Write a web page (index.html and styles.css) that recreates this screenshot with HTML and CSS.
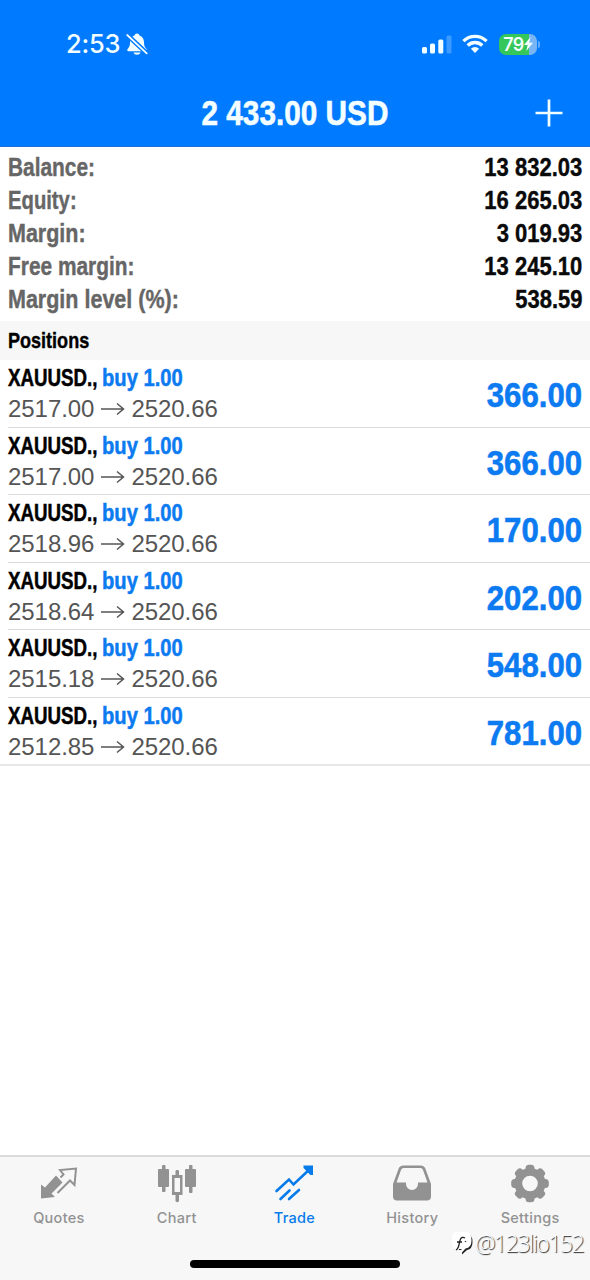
FILE: index.html
```html
<!DOCTYPE html>
<html lang="en">
<head>
<meta charset="utf-8">
<title>Trade</title>
<link rel="stylesheet" href="styles.css">
</head>
<body>
<div class="app">
  <header class="header">
    <div class="status">
      <div class="status-left">
        <span class="clock">2:53</span>
        <svg class="bell" width="22" height="24" viewBox="0 0 22 24"><path fill="#f2feff" d="M11 1.500c1.400 0 2 .8 2.300 1.700C16.500 4.500 18 7 18 10.500c0 3.500 1 5 2.400 6.500.8 1 .3 2.300-.8 2.300H2.400c-1.100 0-1.600-1.300-.8-2.300C3 15.500 4 14 4 10.500 4 7 5.500 4.500 8.700 3.200 9 2.300 9.600 1.500 11 1.500zM7.500 20.500h7c-.5 1.600-1.900 2.200-3.500 2.200s-3-.6-3.500-2.200z"/><path stroke="#007aff" stroke-width="4.600" d="M0 1.800 22 22.500"/><path stroke="#f2feff" stroke-width="1.800" stroke-linecap="round" d="M1.200 3 20.700 21.300"/></svg>
      </div>
      <div class="status-right">
        <svg width="30" height="20" viewBox="0 0 30 20"><g fill="#f2feff"><rect x="0" y="13" width="5" height="6.500" rx="1.500"/><rect x="8" y="9.500" width="5" height="10" rx="1.500"/><rect x="16.300" y="5.500" width="5" height="14" rx="1.500"/><rect opacity=".25" x="24.500" y="1.500" width="5" height="18" rx="1.500"/></g></svg>
        <svg class="wifi" width="26" height="20" viewBox="0 0 26 20"><g fill="none" stroke="#f2feff" stroke-width="3.300"><path d="M1.400 7.200a16.500 16.500 0 0 1 23.200 0"/><path d="M5.700 11.500a10.400 10.400 0 0 1 14.600 0"/></g><path fill="#f2feff" d="M8.900 14.700a5.900 5.900 0 0 1 8.200 0L13 19z"/></svg>
        <div class="battery"><span class="battery-level">79</span><svg width="9" height="14" viewBox="0 0 9 14"><path fill="#f2feff" d="M6.500 0 0 8h3.600L2.300 14 9 5.800H5.300z"/></svg></div><span class="battery-cap"></span>
      </div>
    </div>
    <div class="titlebar">
      <h1 class="title">2 433.00 USD</h1>
      <svg class="plus" width="28" height="28" viewBox="0 0 28 28"><path stroke="#f2feff" stroke-width="2.700" d="M14 .5v27M.5 14h27"/></svg>
    </div>
  </header>

  <section class="summary">
    <div class="summary-row"><span class="label">Balance:</span><span class="value">13 832.03</span></div>
    <div class="summary-row"><span class="label label-narrow">Equity:</span><span class="value">16 265.03</span></div>
    <div class="summary-row"><span class="label label-wide">Margin:</span><span class="value">3 019.93</span></div>
    <div class="summary-row"><span class="label">Free margin:</span><span class="value">13 245.10</span></div>
    <div class="summary-row"><span class="label label-wide">Margin level (%):</span><span class="value">538.59</span></div>
  </section>

  <h2 class="section"><span class="section-text">Positions</span></h2>
  <main class="positions">
    <article class="position"><div><div class="deal"><span class="symbol">XAUUSD.,</span><span class="side">buy 1.00</span></div><div class="prices"><span>2517.00</span><svg class="arrow" viewBox="0 0 24 14"><path d="M0 7h22M16 1.500 22.500 7 16 12.500"/></svg><span>2520.66</span></div></div><span class="profit">366.00</span></article>
    <article class="position"><div><div class="deal"><span class="symbol">XAUUSD.,</span><span class="side">buy 1.00</span></div><div class="prices"><span>2517.00</span><svg class="arrow" viewBox="0 0 24 14"><path d="M0 7h22M16 1.500 22.500 7 16 12.500"/></svg><span>2520.66</span></div></div><span class="profit">366.00</span></article>
    <article class="position"><div><div class="deal"><span class="symbol">XAUUSD.,</span><span class="side">buy 1.00</span></div><div class="prices"><span>2518.96</span><svg class="arrow" viewBox="0 0 24 14"><path d="M0 7h22M16 1.500 22.500 7 16 12.500"/></svg><span>2520.66</span></div></div><span class="profit">170.00</span></article>
    <article class="position"><div><div class="deal"><span class="symbol">XAUUSD.,</span><span class="side">buy 1.00</span></div><div class="prices"><span>2518.64</span><svg class="arrow" viewBox="0 0 24 14"><path d="M0 7h22M16 1.500 22.500 7 16 12.500"/></svg><span>2520.66</span></div></div><span class="profit">202.00</span></article>
    <article class="position"><div><div class="deal"><span class="symbol">XAUUSD.,</span><span class="side">buy 1.00</span></div><div class="prices"><span>2515.18</span><svg class="arrow" viewBox="0 0 24 14"><path d="M0 7h22M16 1.500 22.500 7 16 12.500"/></svg><span>2520.66</span></div></div><span class="profit">548.00</span></article>
    <article class="position"><div><div class="deal"><span class="symbol">XAUUSD.,</span><span class="side">buy 1.00</span></div><div class="prices"><span>2512.85</span><svg class="arrow" viewBox="0 0 24 14"><path d="M0 7h22M16 1.500 22.500 7 16 12.500"/></svg><span>2520.66</span></div></div><span class="profit">781.00</span></article>
  </main>

  <nav class="tabs">
    <a class="tab"><svg width="40" height="40" viewBox="0 0 40 40"><path fill="#929292" d="M2 20.500 6 23.500 17 11.500 23.500 18.500 12.500 29.500l3.500 3.500L2 34.500z"/><path fill="none" stroke="#929292" stroke-width="2" d="M21.500 13.500 24.500 10.500 21 6 37 4.500 35.500 21 31 16.500 18.500 29"/></svg><span>Quotes</span></a>
    <a class="tab"><svg width="40" height="40" viewBox="0 0 40 40"><g fill="#929292"><rect x="1" y="5" width="11" height="18" rx="1"/><rect x="5" y="1" width="3.500" height="27" rx="1"/><rect x="28" y="5" width="11" height="18" rx="1"/><rect x="32" y="1" width="3.500" height="28" rx="1"/><path d="M18.500 7c0-1.500 3.500-1.500 3.500 0v4h3.500v20H22v6c0 1.500-3.500 1.500-3.500 0v-6H15V11h3.500zm-1 7v14H23V14z"/></g></svg><span>Chart</span></a>
    <a class="tab tab-active"><svg width="40" height="40" viewBox="0 0 40 40"><g fill="none" stroke="#087bea" stroke-width="2.600" stroke-linecap="round"><path d="M2.500 27 15 15.500l4.500 5L37 4"/><path d="M6.500 35 15.500 26.500M15 35 25 26"/></g><path fill="#087bea" d="M29.500 1.500H39V11h-2.600L29.500 4z"/></svg><span>Trade</span></a>
    <a class="tab"><svg width="40" height="40" viewBox="0 0 40 40"><path fill="#929292" fill-rule="evenodd" d="M6.500 5Q7.500 1.500 11.500 1.500h17q4 0 5 3.500L39 20v12.500q0 4-4 4H5q-4 0-4-4V20zM11.500 4Q9.800 4 9 6L4.500 18.500H14V20a6 6 0 0 0 12 0v-1.500h9.500L31 6q-.7-2-2.500-2z"/></svg><span>History</span></a>
    <a class="tab"><svg width="40" height="40" viewBox="0 0 40 40"><g fill="#929292"><path fill-rule="evenodd" d="M20 4a15.500 15.500 0 1 0 0 31 15.500 15.500 0 0 0 0-31zm0 7.700a7.800 7.800 0 1 1 0 15.600 7.800 7.800 0 0 1 0-15.600z"/><rect x="15.500" y=".7" width="9" height="8" rx="3.500"/><rect x="15.500" y="30.300" width="9" height="8" rx="3.500"/><rect x="1.200" y="15" width="8" height="9" rx="3.500"/><rect x="30.800" y="15" width="8" height="9" rx="3.500"/><g transform="rotate(45 20 19.500)"><rect x="15.500" y=".7" width="9" height="8" rx="3.500"/><rect x="15.500" y="30.300" width="9" height="8" rx="3.500"/><rect x="1.200" y="15" width="8" height="9" rx="3.500"/><rect x="30.800" y="15" width="8" height="9" rx="3.500"/></g></g></svg><span>Settings</span></a>
    <div class="watermark"><svg width="24" height="26" viewBox="0 0 24 26"><path fill="#222" d="M8 4h7q6.500 0 6.500 8 0 7-5.500 8l-5 4.500V20H8z"/><path fill="#fff" d="M6 2h8.500q6 0 6 8.500 0 7-6 8l-4 4.500v-4H6q-5 0-5-5.500V7q0-5 5-5z"/><path fill="none" stroke="#222" stroke-width="1.300" d="M5 20c3.500-2 2.500-6 4.500-11 1-2 3-2 4.500-1M6 12h5"/><circle cx="14.500" cy="11.500" r=".8" fill="#444"/></svg><span class="handle">@123lio152</span></div>
    <div class="home-bar"></div>
  </nav>
</div>
</body>
</html>
```
FILE: styles.css
```css
* { box-sizing: border-box; }
body { margin: 0; background: #fff; font-family: "Liberation Sans", Arial, sans-serif; }
.app { display: flex; flex-direction: column; width: 590px; height: 1280px; overflow: hidden; }
.header { height: 147px; flex: none; background: #007aff; border-bottom: 1px solid #1b74d6; color: #f2feff; }
.status { display: flex; justify-content: space-between; align-items: center; height: 80px; padding: 8px 50px 0 66px; }
.status-left, .status-right { display: flex; align-items: center; }
.clock { width: 60px; font: 500 25.5px/30px Inter, sans-serif; letter-spacing: -.2px; }
.wifi { margin: 0 11px 0 10px; }
.battery { display: flex; align-items: center; justify-content: center; width: 38px; height: 21px; border-radius: 7px; background: linear-gradient(90deg, #35c759 78%, #78b5f5 78%); }
.battery-level { font: 600 18px/21px Inter, sans-serif; letter-spacing: -.7px; }
.battery-cap { width: 2px; height: 7px; margin-left: 1px; border-radius: 0 2px 2px 0; background: #62adff; }
.titlebar { display: grid; grid-template-columns: 1fr auto 1fr; align-items: center; height: 67px; padding: 0 27px 2px 26px; }
.title { grid-column: 2; margin: 0; font-size: 35px; line-height: 65px; white-space: nowrap; transform: scaleX(.85); -webkit-text-stroke: .6px currentColor; }
.plus { justify-self: end; }
.summary { flex: none; height: 174px; padding: 4px 8px 0; font-size: 25px; font-weight: 700; }
.summary-row { display: flex; justify-content: space-between; height: 33px; line-height: 33px; -webkit-text-stroke: .4px currentColor; }
.label { color: #666; transform: scaleX(.835); transform-origin: left; }
.label-narrow { transform: scaleX(.81); }
.label-wide { transform: scaleX(.86); }
.value { color: #0a0a0a; transform: scaleX(.88); transform-origin: right; }
.section { flex: none; margin: 0; height: 39px; padding-left: 8px; background: #f7f7f7; font-size: 22px; line-height: 40px; }
.section-text { display: inline-block; transform: scaleX(.82); transform-origin: left; -webkit-text-stroke: .4px currentColor; }
.positions { flex: 1; }
.position { display: flex; justify-content: space-between; height: 67.6px; margin-left: 8px; padding: 3px 8px 0 0; border-bottom: 1px solid #dcdcdc; }
.position:last-child { margin-left: 0; padding-left: 8px; border-bottom: 2px solid #e8e8e8; }
.deal { display: flex; height: 30px; font-size: 24px; font-weight: 700; line-height: 29px; white-space: nowrap; -webkit-text-stroke: .5px currentColor; }
.symbol { flex: none; width: 94px; transform: scaleX(.78); transform-origin: left; }
.side { color: #0c7af0; transform: scaleX(.84); transform-origin: left; }
.prices { display: flex; align-items: center; height: 32px; color: #555; font-size: 24px; line-height: 32px; letter-spacing: -.05px; }
.arrow { width: 24px; height: 14px; margin: 0 6px 0 7px; fill: none; stroke: #555; stroke-width: 1.5; }
.profit { color: #0c7af0; font-size: 35px; font-weight: 700; line-height: 64px; transform: scaleX(.89); transform-origin: right; -webkit-text-stroke: .6px currentColor; }
.tabs { position: relative; flex: none; display: grid; grid-template-columns: repeat(5, 117.8px); height: 125px; padding-top: 8px; background: #f7f7f7; border-top: 2px solid #dbdbdb; }
.tab { display: flex; flex-direction: column; align-items: center; color: #929292; font: 500 14.5px/18px Inter, sans-serif; letter-spacing: .3px; }
.tab svg { margin-top: -1px; }
.tab span { margin-top: 5px; }
.tab-active { color: #087bea; }
.watermark { position: absolute; left: 451px; top: 72px; display: flex; align-items: center; height: 28px; }
.handle { color: #fff; font: 300 23px/28px "Open Sans", sans-serif; letter-spacing: -1.5px; text-shadow: 1px 1px 1px #222; white-space: nowrap; }
.home-bar { position: absolute; left: 190px; bottom: 12px; width: 210px; height: 8px; border-radius: 4px; background: #000; }
```
